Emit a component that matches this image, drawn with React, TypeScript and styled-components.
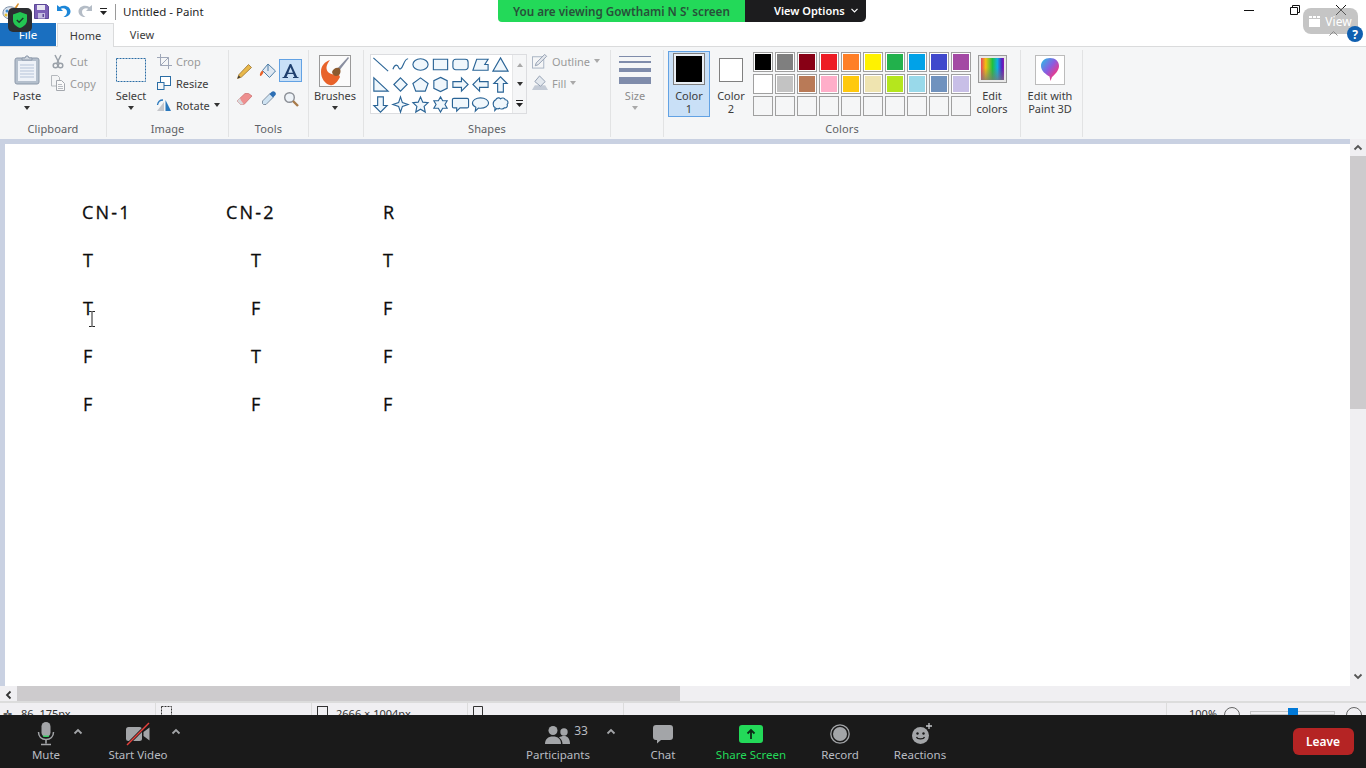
import React from "react";
import styled, { createGlobalStyle } from "styled-components";

const GlobalStyle = createGlobalStyle`
  html, body {
    margin: 0;
    padding: 0;
    overflow: hidden;
    background: #fff;
  }
  * {
    box-sizing: border-box;
  }
`;

const UI_FONT = `"Noto Sans", "Open Sans", "Liberation Sans", sans-serif`;

const Page = styled.div`
  position: relative;
  width: 1366px;
  height: 768px;
  overflow: hidden;
  display: flex;
  flex-direction: column;
  font-family: ${UI_FONT};
  font-size: 11px;
  color: #3c3c3c;
`;

/* title bar */
const TitleBar = styled.div`
  height: 23px;
  flex: none;
  display: flex;
  align-items: center;
  background: #fff;
`;

const QatSlot = styled.div<{ $w: number }>`
  width: ${(p) => p.$w}px;
  height: 23px;
  flex: none;
  display: flex;
  align-items: center;
  justify-content: center;
`;

const QatArrow = styled.svg<{ $flip?: boolean }>`
  transform: ${(p) => (p.$flip ? "scaleX(-1)" : "none")};
`;

const TitleDivider = styled.div`
  width: 1px;
  height: 16px;
  margin: 0 7px 0 5px;
  background: #9a9a9a;
`;

const TitleText = styled.div`
  font-size: 11.5px;
  color: #1f1f1f;
`;

const WindowControls = styled.div`
  margin-left: auto;
  margin-right: 2px;
  display: flex;
  align-self: flex-start;
`;

const WindowButton = styled.div`
  width: 46px;
  height: 20px;
  display: flex;
  align-items: center;
  justify-content: center;
`;

/* tabs */
const TabRow = styled.div`
  height: 23px;
  flex: none;
  display: flex;
  background: #fff;
  position: relative;
  z-index: 1;
`;

const FileTab = styled.div`
  width: 56px;
  display: flex;
  align-items: center;
  justify-content: center;
  background: #1a6fc0;
  color: #fff;
  font-size: 11.5px;
`;

const Tab = styled.div<{ $active?: boolean }>`
  width: ${(p) => (p.$active ? 57 : 56)}px;
  margin-left: ${(p) => (p.$active ? 1 : 0)}px;
  height: ${(p) => (p.$active ? 24 : 23)}px;
  display: flex;
  align-items: center;
  justify-content: center;
  font-size: 11px;
  letter-spacing: 0.1px;
  color: #3a3a3a;
  background: ${(p) => (p.$active ? "#f5f6f7" : "transparent")};
  border: ${(p) => (p.$active ? "1px solid #dadbdc" : "0")};
  border-bottom: 0;
`;

/* ribbon */
const Ribbon = styled.div`
  height: 93px;
  flex: none;
  display: flex;
  padding: 3px 0 2px;
  background: #f5f6f7;
  border-top: 1px solid #dadbdc;
`;

const Group = styled.div<{ $w: number; $plain?: boolean }>`
  width: ${(p) => p.$w}px;
  flex: none;
  display: flex;
  flex-direction: column;
  border-right: ${(p) => (p.$plain ? "0" : "1px solid #e2e3e4")};
`;

const GroupBody = styled.div<{ $pl?: number }>`
  flex: 1;
  display: flex;
  align-items: flex-start;
  padding-left: ${(p) => p.$pl ?? 0}px;
`;

const Caption = styled.div`
  height: 18px;
  line-height: 20px;
  text-align: center;
  font-size: 11px;
  letter-spacing: 0.1px;
  color: #5e6165;
`;

const BigButton = styled.div<{ $w: number; $active?: boolean; $ml?: number }>`
  width: ${(p) => p.$w}px;
  height: 66px;
  flex: none;
  margin-top: 1px;
  margin-left: ${(p) => p.$ml ?? 0}px;
  padding-top: ${(p) => (p.$active ? 3 : 4)}px;
  display: flex;
  flex-direction: column;
  align-items: center;
  background: ${(p) => (p.$active ? "#c9e0f7" : "transparent")};
  border: 1px solid ${(p) => (p.$active ? "#62a2e4" : "transparent")};
  border-width: ${(p) => (p.$active ? 1 : 0)}px;
`;

const BigIcon = styled.div<{ $pt?: number }>`
  height: 34px;
  flex: none;
  padding-top: ${(p) => p.$pt ?? 0}px;
  display: flex;
  align-items: flex-start;
  justify-content: center;
`;

const BigLabel = styled.div<{ $muted?: boolean }>`
  font-size: 11px;
  line-height: 13px;
  text-align: center;
  white-space: pre-line;
  color: ${(p) => (p.$muted ? "#8c8c8c" : "#3c3c3c")};
`;

const DownCaret = styled.span<{ $muted?: boolean; $inline?: boolean; $flat?: boolean; $up?: boolean }>`
  display: inline-block;
  width: 0;
  height: 0;
  margin-top: ${(p) => (p.$inline || p.$flat ? 0 : 4)}px;
  transform: ${(p) => (p.$up ? "rotate(180deg)" : "none")};
  border-left: 3.5px solid transparent;
  border-right: 3.5px solid transparent;
  border-top: 4px solid ${(p) => (p.$muted ? "#a9a9a9" : "#333")};
`;

const SmallStack = styled.div<{ $ml: number }>`
  margin-left: ${(p) => p.$ml}px;
  display: flex;
  flex-direction: column;
`;

const SmallButton = styled.div<{ $muted?: boolean }>`
  height: 22px;
  display: flex;
  align-items: center;
  gap: 4px;
  font-size: 11px;
  color: ${(p) => (p.$muted ? "#9a9a9a" : "#3c3c3c")};
`;

const SmallIcon = styled.span`
  width: 16px;
  height: 16px;
  flex: none;
  display: flex;
  align-items: center;
  justify-content: center;
`;

const ToolGrid = styled.div`
  margin: 9px 0 0 4px;
  display: grid;
  grid-template-columns: repeat(3, 23px);
  grid-auto-rows: 23px;
  row-gap: 5px;
`;

const ToolCell = styled.div<{ $active?: boolean }>`
  display: flex;
  align-items: center;
  justify-content: center;
  background: ${(p) => (p.$active ? "#c9e0f7" : "transparent")};
  border: ${(p) => (p.$active ? "1px solid #62a2e4" : "0")};
`;

const Gallery = styled.div`
  margin: 4px 0 0 6px;
  width: 157px;
  height: 60px;
  flex: none;
  display: flex;
  background: #fff;
  border: 1px solid #dcdde0;
`;

const ShapeGrid = styled.div`
  width: 140px;
  display: grid;
  grid-template-columns: repeat(7, 20px);
  grid-auto-rows: 20px;
  margin: -1px 1px 0 0;
`;

const ShapeCell = styled.div`
  display: flex;
  align-items: center;
  justify-content: center;
  transform: translateX(-1px);
`;

const GalleryScroll = styled.div`
  flex: 1;
  display: flex;
  flex-direction: column;
  background: #f5f6f7;
  border-left: 1px solid #e6e7e8;
`;

const GalleryArrow = styled.div`
  flex: 1;
  display: flex;
  align-items: center;
  justify-content: center;
`;

const SizeLine = styled.div<{ $h: number; $mb: number }>`
  width: 32px;
  height: ${(p) => p.$h}px;
  margin-bottom: ${(p) => p.$mb}px;
  background: #7f8cab;
`;

const SizeIcon = styled.div`
  height: 34px;
  flex: none;
  padding-top: 1px;
`;

const ColorWell = styled.div<{ $size: number; $mt: number; $fill: string }>`
  width: ${(p) => p.$size}px;
  height: ${(p) => p.$size}px;
  margin-top: ${(p) => p.$mt}px;
  background: ${(p) => p.$fill};
  border: 1px solid #808080;
  outline: ${(p) => (p.$fill === "#000" ? "2px solid #e9eef4" : "0")};
  outline-offset: -3px;
`;

const Palette = styled.div`
  margin: 2px 0 0 1px;
  display: grid;
  grid-template-columns: repeat(10, 20px);
  grid-auto-rows: 20px;
  gap: 2px;
`;

const Swatch = styled.div<{ $c?: string }>`
  background: ${(p) => p.$c ?? "#f5f6f7"};
  border: 1px solid #a0a0a0;
  box-shadow: inset 0 0 0 1px ${(p) => (p.$c ? "#fff" : "transparent")};
`;

const Spectrum = styled.div`
  width: 29px;
  height: 28px;
  border: 1px solid #9a9a9a;
  box-shadow: inset 0 0 0 2px #e8e8e8;
  background:
    linear-gradient(to bottom, rgba(255, 255, 255, 0) 45%, rgba(120, 120, 120, 0.85) 100%),
    linear-gradient(to right, #e0107a, #f4c010 25%, #20c040 50%, #10b0e0 68%, #5020c0 85%, #d010a0);
`;

const PreviewTile = styled.div`
  width: 30px;
  height: 30px;
  display: flex;
  align-items: center;
  justify-content: center;
  background: #fff;
  border: 1px solid #bcbcbc;
`;

/* work area */
const WorkArea = styled.div`
  flex: 1;
  min-height: 0;
  display: flex;
  background: #c9d1e2;
`;

const CanvasPane = styled.div`
  flex: 1;
  padding: 5px 0 0 5px;
`;

const Canvas = styled.div`
  position: relative;
  height: 100%;
  padding: 44px 0 0 77px;
  background: #fff;
  overflow: hidden;
`;

const Sheet = styled.div`
  display: grid;
  grid-template-columns: 144px 157px 60px;
  grid-auto-rows: 48px;
  align-items: center;
  font-family: "Open Sans", "Noto Sans", sans-serif;
  font-size: 18px;
  color: #0c0c0c;
  -webkit-text-stroke: 0.3px #0c0c0c;
`;

const SheetCell = styled.div<{ $indent?: number; $wide?: boolean }>`
  padding-left: ${(p) => p.$indent ?? 0}px;
  letter-spacing: ${(p) => (p.$wide ? 2.2 : 0)}px;
`;

const IBeam = styled.svg`
  position: absolute;
  left: 83px;
  top: 167px;
`;

const VScroll = styled.div`
  width: 16px;
  flex: none;
  display: flex;
  flex-direction: column;
  background: #f0eff2;
`;

const ScrollEnd = styled.div<{ $size?: number; $pt?: number; $pb?: number }>`
  flex: none;
  width: ${(p) => p.$size ?? 16}px;
  height: ${(p) => p.$size ?? 16}px;
  padding-top: ${(p) => p.$pt ?? 0}px;
  padding-bottom: ${(p) => p.$pb ?? 0}px;
  display: flex;
  align-items: center;
  justify-content: center;
`;

const VThumb = styled.div`
  height: 253px;
  background: #cdcbcd;
`;

const VTrack = styled.div`
  flex: 1;
  display: flex;
  flex-direction: column;
  padding-top: 1px;
`;

const HScroll = styled.div`
  height: 15px;
  flex: none;
  display: flex;
  align-items: stretch;
  background: #f0eff2;
`;

const HThumb = styled.div`
  width: 663px;
  background: #cdcbcd;
`;

const HTrack = styled.div`
  flex: 1;
`;

const StatusBar = styled.div`
  height: 14px;
  flex: none;
  display: flex;
  overflow: hidden;
  background: #f0eff2;
  border-top: 2px solid #dcdcdc;
`;

const StatusCell = styled.div<{ $w?: number; $gap?: number }>`
  width: ${(p) => (p.$w ? `${p.$w}px` : "auto")};
  flex: ${(p) => (p.$w ? "none" : "1")};
  height: 30px;
  padding: 2px 0 0 3px;
  display: flex;
  align-items: flex-start;
  gap: ${(p) => p.$gap ?? 5}px;
  font-size: 11px;
  line-height: 18px;
  white-space: nowrap;
  color: #333;
  border-right: 1px solid #dcdcdc;
`;

const ZoomCell = styled.div`
  flex: 1;
  padding: 2px 0 0 22px;
  display: flex;
  align-items: flex-start;
  font-size: 11px;
  line-height: 18px;
  color: #333;
`;

const ZoomRound = styled.span<{ $ml: number }>`
  width: 16px;
  height: 16px;
  margin-left: ${(p) => p.$ml}px;
  margin-top: 2px;
  flex: none;
  border-radius: 50%;
  border: 1px solid #666;
`;

const ZoomTrack = styled.span`
  position: relative;
  width: 85px;
  height: 4px;
  margin: 6px 0 0 10px;
  flex: none;
  border: 1px solid #c4c4c4;
`;

const ZoomThumb = styled.span`
  position: absolute;
  left: 37px;
  top: -4px;
  width: 10px;
  height: 14px;
  background: #0078d7;
`;

/* meeting toolbar */
const MeetingBar = styled.div`
  height: 53px;
  flex: none;
  display: flex;
  align-items: flex-start;
  padding: 6px 0 0 20px;
  background: #1a1a1a;
`;

const BarItem = styled.div<{ $w: number; $ml?: number; $green?: boolean }>`
  width: ${(p) => p.$w}px;
  margin-left: ${(p) => p.$ml ?? 0}px;
  flex: none;
  display: flex;
  flex-direction: column;
  align-items: center;
  font-size: 11.5px;
  line-height: 16px;
  white-space: nowrap;
  color: ${(p) => (p.$green ? "#23d959" : "#b9bcc2")};
`;

const BarIcon = styled.div<{ $shift?: number }>`
  height: 26px;
  margin-left: ${(p) => p.$shift ?? 0}px;
  display: flex;
  align-items: center;
  justify-content: center;
`;

const Count = styled.span`
  margin-left: 4px;
  margin-top: -6px;
  font-size: 12px;
  color: #b9bcc2;
`;

const BarCaret = styled.div<{ $ml?: number }>`
  width: 12px;
  margin-left: ${(p) => p.$ml ?? 0}px;
  height: 22px;
  flex: none;
  display: flex;
  align-items: center;
  justify-content: center;
`;

const LeaveButton = styled.div`
  width: 61px;
  height: 27px;
  margin: 7px 0 0 342px;
  padding-right: 1px;
  display: flex;
  align-items: center;
  justify-content: center;
  border-radius: 6px;
  background: #b52424;
  color: #fff;
  font-size: 12px;
  font-weight: 600;
`;

/* zoom overlays on top of the shared screen */
const ShareBanner = styled.div`
  position: absolute;
  left: 498px;
  top: 0;
  height: 22px;
  display: flex;
  z-index: 3;
  font-weight: 600;
`;

const BannerStatus = styled.div`
  width: 247px;
  padding-left: 15px;
  display: flex;
  align-items: center;
  background: #23d959;
  color: #28503a;
  font-size: 11.7px;
  border-bottom-left-radius: 4px;
`;

const BannerAction = styled.div`
  width: 121px;
  padding: 0 0 1px 29px;
  display: flex;
  align-items: center;
  gap: 6px;
  background: #1c1c1e;
  color: #fff;
  font-size: 11px;
  border-bottom-right-radius: 5px;
`;

const ShieldBadge = styled.div`
  position: absolute;
  left: 8px;
  top: 8px;
  width: 24px;
  height: 24px;
  z-index: 3;
  display: flex;
  align-items: center;
  justify-content: center;
  background: #2b2e31;
  border-radius: 5px;
`;

const ViewPill = styled.div`
  position: absolute;
  left: 1303px;
  top: 8px;
  width: 55px;
  height: 26px;
  z-index: 3;
  display: flex;
  align-items: center;
  justify-content: center;
  gap: 5px;
  background: rgba(150, 150, 150, 0.55);
  border-radius: 8px;
  color: #fff;
  font-size: 12px;
`;

const HelpBadge = styled.div`
  position: absolute;
  left: 1347px;
  top: 26px;
  width: 16px;
  height: 16px;
  z-index: 4;
  display: flex;
  align-items: center;
  justify-content: center;
  border-radius: 50%;
  background: #0f5fb0;
  color: #fff;
  font-size: 12px;
  font-weight: 700;
`;

const PillCaret = styled.svg`
  position: absolute;
  left: 1329px;
  top: 31px;
  z-index: 3;
`;

const SHAPE_PATHS = [
  "M2.5 3L18 17",
  "M2 15c2-6 5-5 6-2s3 2 5-3 3-6 5-6",
  "M2 10a8 6 0 1 0 16 0a8 6 0 1 0-16 0z",
  "M2.5 4.5h15v11h-15z",
  "M5 4.5h10a3 3 0 0 1 3 3v5a3 3 0 0 1-3 3H5a3 3 0 0 1-3-3v-5a3 3 0 0 1 3-3z",
  "M2 16L6 4.5h12L14.500 10H18v6z",
  "M10 3l8 14H2z",
  "M3 3v14h15z",
  "M10 3l7 7-7 7-7-7z",
  "M10 3l8 6-3 8H5L2 9z",
  "M10 2.500L17 6v8l-7 3.500L3 14V6z",
  "M2 7h9V3l7 7-7 7v-4H2z",
  "M18 7H9V3l-7 7 7 7v-4h9z",
  "M7 18V9H3l7-7 7 7h-4v9z",
  "M7 2v9H3l7 7 7-7h-4V2z",
  "M10 2l2 6 6 2-6 2-2 6-2-6-6-2 6-2z",
  "M10 2l2.400 5.500 5.600.6-4.200 3.900 1.200 6L10 15l-5 3 1.200-6L2 8.100l5.600-.6z",
  "M10 2l2.300 4H17l-2.300 4 2.300 4h-4.700L10 18l-2.300-4H3l2.300-4L3 6h4.700z",
  "M3 3.500h14A1.500 1.500 0 0 1 18.500 5v7a1.500 1.500 0 0 1-1.500 1.500H9.500L6 17v-3.500H3A1.500 1.500 0 0 1 1.500 12V5A1.500 1.500 0 0 1 3 3.500z",
  "M10 3c4.700 0 8.500 2.400 8.500 5.500S14.700 14 10 14c-.8 0-1.500-.1-2.200-.2L4.500 17l.6-4.100C3 11.900 1.500 10.300 1.500 8.500 1.500 5.400 5.300 3 10 3z",
  "M5 5c1-2.500 4-2.500 5-1 1.500-1.500 4.500-1 5 1 2.500 0 4 3 2 5 1 2-1 4-3 3.500-1 1.500-4 1.500-5 .5-1 .7-2 .7-3 .2l-2 2 .3-3C2 12.500 1 7 5 5z",
];

const PALETTE_ROWS = [
  ["#000000", "#7f7f7f", "#880015", "#ed1c24", "#ff7f27", "#fff200", "#22b14c", "#00a2e8", "#3f48cc", "#a349a4"],
  ["#ffffff", "#c3c3c3", "#b97a57", "#ffaec9", "#ffc90e", "#efe4b0", "#b5e61d", "#99d9ea", "#7092be", "#c8bfe7"],
];

const SHEET = [
  ["T", "T", "T"],
  ["T", "F", "F"],
  ["F", "T", "F"],
  ["F", "F", "F"],
];

const COLUMN_INDENT = [1, 25, 0];

function Chevron({ dir, color = "#555" }: { dir: "up" | "down" | "left" | "right"; color?: string }) {
  const rotate = { up: 0, right: 90, down: 180, left: 270 }[dir];
  return (
    <svg width="10" height="10" viewBox="0 0 10 10">
      <path d="M1.500 6.500L5 3l3.500 3.500" fill="none" stroke={color} strokeWidth="1.800" transform={`rotate(${rotate} 5 5)`} />
    </svg>
  );
}

function PaintLogo() {
  return (
    <svg width="20" height="20" viewBox="0 0 20 20">
      <path d="M2 11c0-5 5-7 9-6 4 .8 6 3 5 6-1 2-3 1-4 2-1 2 1 4-2 4-4 0-8-2-8-6z" fill="#dfe6ef" stroke="#7b8ea6" />
      <circle cx="6" cy="9" r="1.500" fill="#3a8fd8" />
      <circle cx="10" cy="8" r="1.500" fill="#e04a3a" />
      <circle cx="5" cy="13" r="1.500" fill="#e8c030" />
      <path d="M12 8l5-7 1 1-4 7z" fill="#d89030" />
    </svg>
  );
}

function SaveIcon() {
  return (
    <svg width="15" height="15" viewBox="0 0 15 15">
      <path d="M.5.500h12l2 2v12H.500z" fill="#7a5fb5" stroke="#5b4796" />
      <path d="M3 1h8v5H3z" fill="#e8e6f2" />
      <path d="M4 9h7v5.500H4z" fill="#c4bde0" />
      <path d="M8.500 10h1.500v3H8.500z" fill="#5b4796" />
    </svg>
  );
}

function UndoIcon({ color, flip }: { color: string; flip?: boolean }) {
  return (
    <QatArrow $flip={flip} width="15" height="15" viewBox="0 0 15 15">
      <path d="M1 1v6h6L4.800 4.800C7 3.500 11 4.500 11 8c0 2-1.500 4-3.500 5 4 .5 7-2.500 7-5.500C14.500 2.500 8.500 0 3.500 3z" fill={color} />
    </QatArrow>
  );
}

function QatDropdown() {
  return (
    <svg width="9" height="9" viewBox="0 0 9 9">
      <path d="M1 1.500h7" stroke="#222" strokeWidth="1" />
      <path d="M1 4h7L4.500 8z" fill="#222" />
    </svg>
  );
}

function ClipboardIcon() {
  return (
    <svg width="26" height="30" viewBox="0 0 26 30">
      <rect x="1" y="3" width="24" height="26" rx="2" fill="#b4bfcc" stroke="#8d9aab" />
      <rect x="4" y="6" width="18" height="20" fill="#eef2f8" />
      <path d="M6 10h14M6 13h14M6 16h14M6 19h14M6 22h14" stroke="#b5c3d8" />
      <path d="M8 5V3h3l1-2h2l1 2h3v2z" fill="#cfd6df" stroke="#8d9aab" />
    </svg>
  );
}

function ScissorsIcon() {
  return (
    <svg width="14" height="15" viewBox="0 0 14 15">
      <path d="M4 1l4 8M10 1L6 9" stroke="#9aa1a9" strokeWidth="1.500" />
      <circle cx="4.500" cy="11.500" r="2.300" fill="none" stroke="#9aa1a9" strokeWidth="1.500" />
      <circle cx="9.500" cy="11.500" r="2.300" fill="none" stroke="#9aa1a9" strokeWidth="1.500" />
    </svg>
  );
}

function CopyIcon() {
  return (
    <svg width="16" height="16" viewBox="0 0 16 16">
      <path d="M1.500.500h6l2 2V11h-8z" fill="#f4f5f6" stroke="#b4b8bd" />
      <path d="M6.500 5.500h5l3 3v7h-8z" fill="#fafafa" stroke="#a4a8ae" />
      <path d="M8 9.500h4M8 11.500h5M8 13.500h5" stroke="#b8bcc2" />
    </svg>
  );
}

function CropIcon() {
  return (
    <svg width="15" height="15" viewBox="0 0 15 15">
      <path d="M3.500 0v11.500H15M0 3.500h11.500V15" fill="none" stroke="#9fa7b8" />
      <path d="M3.500 11.500l8-8" stroke="#9fa7b8" />
    </svg>
  );
}

function ResizeIcon() {
  return (
    <svg width="14" height="14" viewBox="0 0 14 14">
      <rect x="3.500" y=".5" width="10" height="9" fill="#fff" stroke="#2a6da5" />
      <rect x=".5" y="6.500" width="6.500" height="7" fill="#f5f6f7" stroke="#2a6da5" />
    </svg>
  );
}

function RotateIcon() {
  return (
    <svg width="16" height="14" viewBox="0 0 16 14">
      <path d="M1 13L8 4v9z" fill="#c4c6cb" />
      <path d="M9.500 13V2l5.500 11z" fill="#2a78bd" />
      <path d="M1.500 7C2 3.500 4.500 2 7 2" fill="none" stroke="#2a78bd" strokeWidth="1.300" />
    </svg>
  );
}

function PencilIcon() {
  return (
    <svg width="16" height="16" viewBox="0 0 16 16">
      <path d="M11.500 1.500l3 3-10 9.500-4 1.500 1.500-4z" fill="#e8b84a" stroke="#9a7230" strokeWidth=".8" />
      <path d="M.5 15.500l1.200-3 1.800 1.800z" fill="#333" />
    </svg>
  );
}

function BucketIcon() {
  return (
    <svg width="18" height="16" viewBox="0 0 18 16">
      <path d="M9 1l7.500 7-6 6.500L3.500 7.500z" fill="#dfe8f2" stroke="#4f7fa8" />
      <path d="M3.500 7.500C1.500 8.500.5 11 1 13c1.800 0 2.500-2 3.500-3.500z" fill="#e8622a" />
      <path d="M9 1v7" stroke="#4f7fa8" />
    </svg>
  );
}

function TextToolIcon() {
  return (
    <svg width="18" height="16" viewBox="0 0 18 16">
      <path d="M.5 15v-1h1.300L7.800 1h1.400l6 13h1.300v1h-5.500v-1h1.500l-1.300-3H5.800l-1.300 3H6v1zM6.300 9.800h4.600L8.500 4.300z" fill="#1f3f6e" />
    </svg>
  );
}

function EraserIcon() {
  return (
    <svg width="17" height="14" viewBox="0 0 17 14">
      <path d="M1 9l8-7.500h3.500L16 4l-8 8.500H4.500z" fill="#ee8f8f" stroke="#c86a6a" strokeWidth=".7" />
      <path d="M1 9l3.500 3.500H8L5 8.500l-1-2.500z" fill="#d9d9dc" />
    </svg>
  );
}

function DropperIcon() {
  return (
    <svg width="16" height="16" viewBox="0 0 16 16">
      <path d="M10 2.500l3.500 3.500-7.500 7.500H3.500L2.500 12.500V10z" fill="#cfe3f2" stroke="#5b6f85" strokeWidth=".7" />
      <path d="M9.500 3l2-2a2 2 0 0 1 3.500 3.500l-2 2z" fill="#2d6fb4" />
    </svg>
  );
}

function MagnifierIcon() {
  return (
    <svg width="16" height="16" viewBox="0 0 16 16">
      <circle cx="6.500" cy="6.500" r="4.800" fill="#eef3f8" stroke="#8b8f96" strokeWidth="1.400" />
      <path d="M10 10l5 5" stroke="#a87b4a" strokeWidth="2.400" />
    </svg>
  );
}

function BrushesIcon() {
  return (
    <svg width="32" height="32" viewBox="0 0 32 32">
      <rect x=".5" y=".5" width="31" height="31" fill="#fbfbfb" stroke="#9a9a9a" />
      <path d="M2 17c0-7 4-10 9-12-3 4-5 8-2 12 3 3 8 3 10 1l2 4c-3 6-7 9-10 8-5-1-9-7-9-13z" fill="#e8622a" />
      <path d="M29 2l1 1-10 13-2-2z" fill="#8a8fa0" />
      <path d="M13 17c1-3 4-5 7-4 2 1 2 5 0 7-3 2-6 1-7-3z" fill="#8b5a2f" />
    </svg>
  );
}

function OutlineIcon() {
  return (
    <svg width="17" height="16" viewBox="0 0 17 16">
      <rect x=".5" y="3.500" width="12" height="12" fill="none" stroke="#a7b2c2" />
      <path d="M13.500 1l2 2-9 9-3 1 1-3z" fill="#e6e9ee" stroke="#8f9caf" />
    </svg>
  );
}

function FillIcon() {
  return (
    <svg width="17" height="16" viewBox="0 0 17 16">
      <path d="M0 15.500l3-5h11l3 5z" fill="#c4cbd6" />
      <path d="M8 .500l6 6-5 5-6-5z" fill="#e3e8ee" stroke="#8f9caf" />
    </svg>
  );
}

function BalloonIcon() {
  return (
    <svg width="22" height="26" viewBox="0 0 22 26">
      <defs>
        <linearGradient id="balloon" x1="0" y1="0" x2="1" y2="1">
          <stop offset="0" stopColor="#21c4e8" />
          <stop offset=".45" stopColor="#8a5ce0" />
          <stop offset=".75" stopColor="#e83a8c" />
          <stop offset="1" stopColor="#f59a2a" />
        </linearGradient>
      </defs>
      <path d="M11 1c5.500 0 9 3.500 9 8 0 4.500-4.500 9-7 11l-1.500 4-1-4.500C7 17.500 2 14 2 9c0-4.500 3.500-8 9-8z" fill="url(#balloon)" />
    </svg>
  );
}

function MicIcon() {
  return (
    <svg width="22" height="26" viewBox="0 0 22 26">
      <rect x="6.500" y="1" width="9" height="15" rx="4.500" fill="#a3a5a8" />
      <path d="M8 15.200h6" stroke="#23d959" strokeWidth="1.200" />
      <path d="M3.500 11c0 4.500 3 7.500 7.500 7.500s7.500-3 7.500-7.500" fill="none" stroke="#a3a5a8" strokeWidth="1.500" />
      <path d="M11 18.500v4M6 23.500h10" stroke="#a3a5a8" strokeWidth="1.600" />
    </svg>
  );
}

function VideoOffIcon() {
  return (
    <svg width="26" height="24" viewBox="0 0 26 24">
      <rect x="1" y="5" width="16" height="14" rx="2.500" fill="#a3a5a8" />
      <path d="M18.500 10l6-4.500v13l-6-4.500z" fill="#a3a5a8" />
      <path d="M2 23L24 1" stroke="#1a1a1a" strokeWidth="3" />
      <path d="M2 23L24 1" stroke="#e8413c" strokeWidth="1.400" />
    </svg>
  );
}

function PeopleIcon() {
  return (
    <svg width="25" height="19" viewBox="0 0 25 19">
      <circle cx="8" cy="5.500" r="4.500" fill="#a3a5a8" />
      <path d="M0 19c0-5 3-7.500 8-7.500s8 2.500 8 7.500z" fill="#a3a5a8" />
      <circle cx="19" cy="7" r="3.700" fill="#a3a5a8" />
      <path d="M14 12.500c1.500-1 3-1.500 5-1.500 3.500 0 6 2.500 6 8h-7.500c0-3-1.300-5-3.500-6.500z" fill="#a3a5a8" />
    </svg>
  );
}

function ChatIcon() {
  return (
    <svg width="22" height="20" viewBox="0 0 22 20">
      <path d="M4 1h14a3 3 0 0 1 3 3v9a3 3 0 0 1-3 3H9l-4 3.500V16H4a3 3 0 0 1-3-3V4a3 3 0 0 1 3-3z" fill="#a3a5a8" />
    </svg>
  );
}

function ShareIcon() {
  return (
    <svg width="24" height="18" viewBox="0 0 24 18">
      <rect width="24" height="18" rx="3" fill="#23d959" />
      <path d="M12 14V5.500M8.500 8.500L12 5l3.500 3.500" fill="none" stroke="#0d2a17" strokeWidth="1.800" />
    </svg>
  );
}

function RecordIcon() {
  return (
    <svg width="20" height="20" viewBox="0 0 20 20">
      <circle cx="10" cy="10" r="9.200" fill="none" stroke="#a3a5a8" strokeWidth="1.300" />
      <circle cx="10" cy="10" r="7" fill="#a3a5a8" />
    </svg>
  );
}

function ReactionIcon() {
  return (
    <svg width="24" height="22" viewBox="-3 0 24 22">
      <circle cx="9.500" cy="12.500" r="8.500" fill="#a3a5a8" />
      <circle cx="6.500" cy="10.500" r="1.200" fill="#1a1a1a" />
      <circle cx="12.500" cy="10.500" r="1.200" fill="#1a1a1a" />
      <path d="M5.500 14c1 2.500 7 2.500 8 0" fill="none" stroke="#1a1a1a" strokeWidth="1.200" />
      <path d="M18 0v6M15 3h6" stroke="#c4c6c9" strokeWidth="1.300" />
    </svg>
  );
}

function ShieldIcon() {
  return (
    <svg width="14" height="16" viewBox="0 0 14 16">
      <path d="M7 0l7 2.500V8c0 4-3 6.500-7 8-4-1.500-7-4-7-8V2.500z" fill="#23c552" />
      <path d="M3.800 8l2.300 2.300 4.200-4.300" fill="none" stroke="#1c3a28" strokeWidth="1.400" />
    </svg>
  );
}

export default function App() {
  return (
    <Page>
      <GlobalStyle />

      <TitleBar>
        <QatSlot $w={22}><PaintLogo /></QatSlot>
        <QatSlot $w={8} />
        <QatSlot $w={22}><SaveIcon /></QatSlot>
        <QatSlot $w={22}><UndoIcon color="#1c86d8" /></QatSlot>
        <QatSlot $w={22}><UndoIcon color="#b4bcc6" flip /></QatSlot>
        <QatSlot $w={14}><QatDropdown /></QatSlot>
        <TitleDivider />
        <TitleText>Untitled - Paint</TitleText>
        <WindowControls>
          <WindowButton>
            <svg width="10" height="10" viewBox="0 0 10 10"><path d="M0 5.500h10" stroke="#111" /></svg>
          </WindowButton>
          <WindowButton>
            <svg width="10" height="10" viewBox="0 0 10 10">
              <path d="M2.500 2.500V.5h7v7h-2M.5 2.500h7v7h-7z" fill="none" stroke="#111" />
            </svg>
          </WindowButton>
          <WindowButton>
            <svg width="10" height="10" viewBox="0 0 10 10"><path d="M0 0l10 10M10 0L0 10" stroke="#111" /></svg>
          </WindowButton>
        </WindowControls>
      </TitleBar>

      <TabRow>
        <FileTab>File</FileTab>
        <Tab $active>Home</Tab>
        <Tab>View</Tab>
      </TabRow>

      <Ribbon>
        <Group $w={107}>
          <GroupBody $pl={8}>
            <BigButton $w={38}>
              <BigIcon><ClipboardIcon /></BigIcon>
              <BigLabel>Paste</BigLabel>
              <DownCaret />
            </BigButton>
            <SmallStack $ml={4}>
              <SmallButton $muted><SmallIcon><ScissorsIcon /></SmallIcon>Cut</SmallButton>
              <SmallButton $muted><SmallIcon><CopyIcon /></SmallIcon>Copy</SmallButton>
            </SmallStack>
          </GroupBody>
          <Caption>Clipboard</Caption>
        </Group>

        <Group $w={122}>
          <GroupBody $pl={4}>
            <BigButton $w={40}>
              <BigIcon $pt={3}>
                <svg width="30" height="24" viewBox="0 0 30 24">
                  <rect x=".5" y=".5" width="29" height="23" fill="none" stroke="#2a6da5" strokeDasharray="2 1" />
                </svg>
              </BigIcon>
              <BigLabel>Select</BigLabel>
              <DownCaret />
            </BigButton>
            <SmallStack $ml={5}>
              <SmallButton $muted><SmallIcon><CropIcon /></SmallIcon>Crop</SmallButton>
              <SmallButton><SmallIcon><ResizeIcon /></SmallIcon>Resize</SmallButton>
              <SmallButton><SmallIcon><RotateIcon /></SmallIcon>Rotate<DownCaret $inline /></SmallButton>
            </SmallStack>
          </GroupBody>
          <Caption>Image</Caption>
        </Group>

        <Group $w={80}>
          <GroupBody>
            <ToolGrid>
              <ToolCell><PencilIcon /></ToolCell>
              <ToolCell><BucketIcon /></ToolCell>
              <ToolCell $active><TextToolIcon /></ToolCell>
              <ToolCell><EraserIcon /></ToolCell>
              <ToolCell><DropperIcon /></ToolCell>
              <ToolCell><MagnifierIcon /></ToolCell>
            </ToolGrid>
          </GroupBody>
          <Caption>Tools</Caption>
        </Group>

        <Group $w={55}>
          <GroupBody>
            <BigButton $w={52}>
              <BigIcon><BrushesIcon /></BigIcon>
              <BigLabel>Brushes</BigLabel>
              <DownCaret />
            </BigButton>
          </GroupBody>
          <Caption />
        </Group>

        <Group $w={247}>
          <GroupBody>
            <Gallery>
              <ShapeGrid>
                {SHAPE_PATHS.map((d, i) => (
                  <ShapeCell key={i}>
                    <svg width="19" height="19" viewBox="0 0 20 20">
                      <path d={d} fill={i < 2 ? "none" : "#f0f7fc"} stroke="#2a6496" strokeWidth="1.200" />
                    </svg>
                  </ShapeCell>
                ))}
              </ShapeGrid>
              <GalleryScroll>
                <GalleryArrow><DownCaret $muted $flat $up /></GalleryArrow>
                <GalleryArrow><DownCaret $flat /></GalleryArrow>
                <GalleryArrow><QatDropdown /></GalleryArrow>
              </GalleryScroll>
            </Gallery>
            <SmallStack $ml={5}>
              <SmallButton $muted><SmallIcon><OutlineIcon /></SmallIcon>Outline<DownCaret $inline $muted /></SmallButton>
              <SmallButton $muted><SmallIcon><FillIcon /></SmallIcon>Fill<DownCaret $inline $muted /></SmallButton>
            </SmallStack>
          </GroupBody>
          <Caption>Shapes</Caption>
        </Group>

        <Group $w={53}>
          <GroupBody>
            <BigButton $w={48}>
              <SizeIcon>
                <SizeLine $h={1} $mb={4} />
                <SizeLine $h={2} $mb={5} />
                <SizeLine $h={4} $mb={5} />
                <SizeLine $h={7} $mb={0} />
              </SizeIcon>
              <BigLabel $muted>Size</BigLabel>
              <DownCaret $muted />
            </BigButton>
          </GroupBody>
          <Caption />
        </Group>

        <Group $w={357}>
          <GroupBody $pl={4}>
            <BigButton $w={42} $active>
              <BigIcon><ColorWell $size={32} $mt={-2} $fill="#000" /></BigIcon>
              <BigLabel>{"Color\n1"}</BigLabel>
            </BigButton>
            <BigButton $w={42}>
              <BigIcon><ColorWell $size={24} $mt={3} $fill="#fff" /></BigIcon>
              <BigLabel>{"Color\n2"}</BigLabel>
            </BigButton>
            <Palette>
              {PALETTE_ROWS.flat().map((c) => (
                <Swatch key={c} $c={c} />
              ))}
              {Array.from({ length: 10 }, (_, i) => (
                <Swatch key={i} />
              ))}
            </Palette>
            <BigButton $w={40} $ml={1}>
              <BigIcon><Spectrum /></BigIcon>
              <BigLabel>{"Edit\ncolors"}</BigLabel>
            </BigButton>
          </GroupBody>
          <Caption>Colors</Caption>
        </Group>

        <Group $w={62}>
          <GroupBody>
            <BigButton $w={58}>
              <BigIcon><PreviewTile><BalloonIcon /></PreviewTile></BigIcon>
              <BigLabel>{"Edit with\nPaint 3D"}</BigLabel>
            </BigButton>
          </GroupBody>
          <Caption />
        </Group>
      </Ribbon>

      <WorkArea>
        <CanvasPane>
          <Canvas>
            <Sheet>
              <SheetCell $wide>CN-1</SheetCell>
              <SheetCell $wide>CN-2</SheetCell>
              <SheetCell>R</SheetCell>
              {SHEET.flatMap((row, r) =>
                row.map((v, c) => (
                  <SheetCell key={`${r}-${c}`} $indent={COLUMN_INDENT[c]}>{v}</SheetCell>
                ))
              )}
            </Sheet>
            <IBeam width="8" height="16" viewBox="0 0 8 16">
              <path d="M1 .5h2.500L4 1l.5-.5H7M4 1v14M1 15.500h2.500L4 15l.5.5H7" fill="none" stroke="#222" />
            </IBeam>
          </Canvas>
        </CanvasPane>
        <VScroll>
          <ScrollEnd $pt={2}><Chevron dir="up" /></ScrollEnd>
          <VTrack>
            <VThumb />
          </VTrack>
          <ScrollEnd $pb={4}><Chevron dir="down" /></ScrollEnd>
        </VScroll>
      </WorkArea>

      <HScroll>
        <ScrollEnd $size={17}><Chevron dir="left" color="#333" /></ScrollEnd>
        <HThumb />
        <HTrack />
        <ScrollEnd $size={52}><Chevron dir="right" color="#333" /></ScrollEnd>
      </HScroll>

      <StatusBar>
        <StatusCell $w={156} $gap={9}>
          <span>✛</span> 86, 175px
        </StatusCell>
        <StatusCell $w={156}>
          <svg width="14" height="12" viewBox="0 0 14 12"><rect x="2.500" y="1.500" width="10" height="9" fill="none" stroke="#333" strokeDasharray="2 1" /></svg>
        </StatusCell>
        <StatusCell $w={156} $gap={7}>
          <svg width="14" height="12" viewBox="0 0 14 12"><rect x="2.500" y="1.500" width="10" height="9" fill="none" stroke="#333" /></svg>
          2666 × 1004px
        </StatusCell>
        <StatusCell $w={156}>
          <svg width="14" height="12" viewBox="0 0 14 12"><path d="M2.500 1.500h9v9h-9z" fill="none" stroke="#333" /></svg>
        </StatusCell>
        <StatusCell $w={543} />
        <ZoomCell>
          100%
          <ZoomRound $ml={7} />
          <ZoomTrack><ZoomThumb /></ZoomTrack>
          <ZoomRound $ml={11} />
        </ZoomCell>
      </StatusBar>

      <MeetingBar>
        <BarItem $w={52}>
          <BarIcon><MicIcon /></BarIcon>
          Mute
        </BarItem>
        <BarCaret><Chevron dir="up" color="#a3a5a8" /></BarCaret>
        <BarItem $w={64} $ml={22}>
          <BarIcon><VideoOffIcon /></BarIcon>
          Start Video
        </BarItem>
        <BarCaret><Chevron dir="up" color="#a3a5a8" /></BarCaret>
        <BarItem $w={64} $ml={344}>
          <BarIcon $shift={17}><PeopleIcon /><Count>33</Count></BarIcon>
          Participants
        </BarItem>
        <BarCaret $ml={15}><Chevron dir="up" color="#a3a5a8" /></BarCaret>
        <BarItem $w={48} $ml={22}>
          <BarIcon><ChatIcon /></BarIcon>
          Chat
        </BarItem>
        <BarItem $w={72} $ml={28} $green>
          <BarIcon><ShareIcon /></BarIcon>
          Share Screen
        </BarItem>
        <BarItem $w={50} $ml={28}>
          <BarIcon><RecordIcon /></BarIcon>
          Record
        </BarItem>
        <BarItem $w={62} $ml={24}>
          <BarIcon><ReactionIcon /></BarIcon>
          Reactions
        </BarItem>
        <LeaveButton>Leave</LeaveButton>
      </MeetingBar>

      <ShieldBadge><ShieldIcon /></ShieldBadge>

      <ShareBanner>
        <BannerStatus>You are viewing Gowthami N S' screen</BannerStatus>
        <BannerAction>
          View Options
          <svg width="7" height="5" viewBox="0 0 7 5"><path d="M.5.800l3 3 3-3" fill="none" stroke="#fff" strokeWidth="1.200" /></svg>
        </BannerAction>
      </ShareBanner>

      <ViewPill>
        <svg width="11" height="11" viewBox="0 0 11 11">
          <path d="M0 3h11v8H0zM0 0h3v2H0zM4 0h3v2H4zM8 0h3v2H8z" fill="#fff" />
        </svg>
        View
      </ViewPill>
      <PillCaret width="9" height="5" viewBox="0 0 9 5">
        <path d="M.5 4.500l4-4 4 4" fill="none" stroke="#8a8a8a" />
      </PillCaret>
      <HelpBadge>?</HelpBadge>
    </Page>
  );
}
